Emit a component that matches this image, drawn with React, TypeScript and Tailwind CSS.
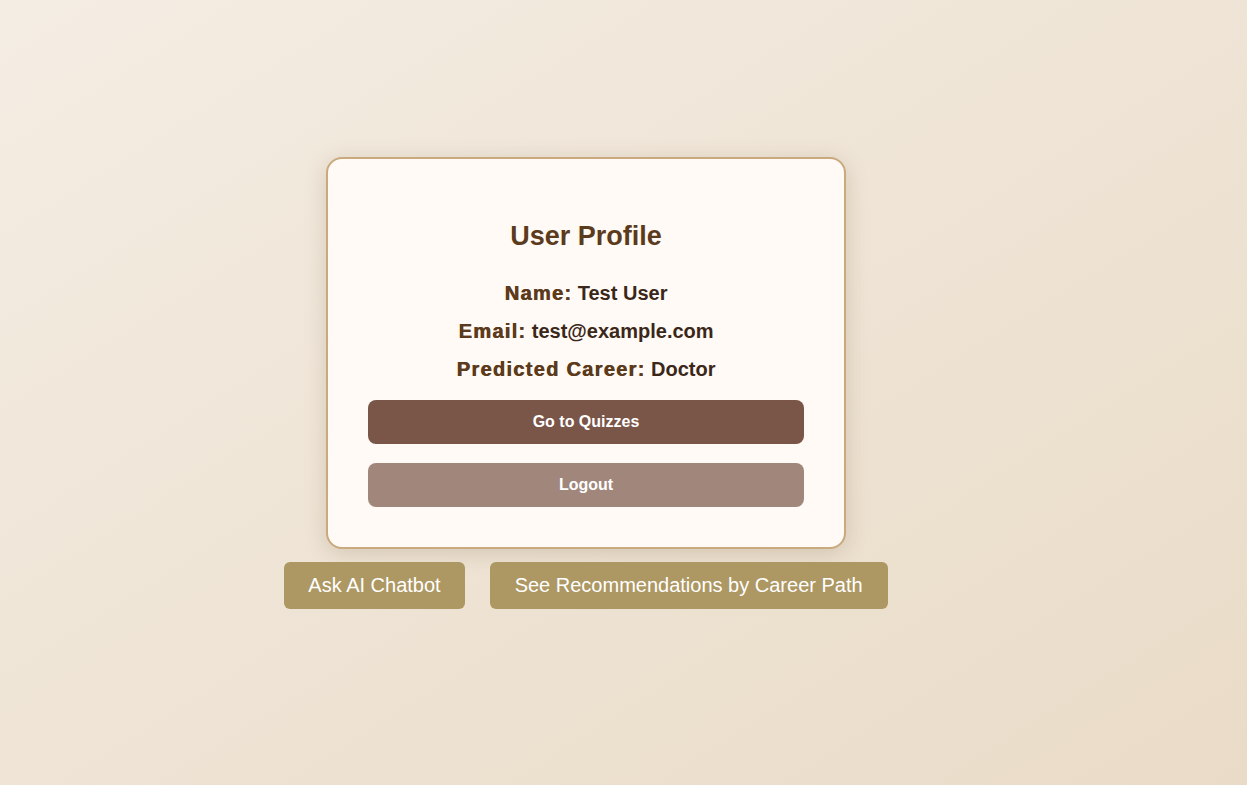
export default function App() {
  return (
    <div className="min-h-screen w-full bg-gradient-to-br from-[#f4ede3] to-[#e9dbc7] font-['Liberation_Sans',Arial,sans-serif] pt-[157px] pb-10 pr-[75px] flex flex-col items-center">
      {/* Profile card */}
      <div className="w-[520px] rounded-2xl border-2 border-[#c9a97d] bg-[#fffaf5] shadow-[0_4px_22px_rgba(90,60,30,0.18)] px-10 pt-[61px] pb-10 flex flex-col items-center">
        <h2 className="text-[27px] leading-[32px] font-bold text-[#5c3a1c]">User Profile</h2>

        <div className="mt-[30px] flex flex-col items-center gap-[15px] text-[20px] leading-[23px] font-bold text-[#3b2719]">
          <p>
            <strong className="font-black tracking-[1.3px] text-[#5c3a1c] [text-shadow:0.6px_0_0_#5c3a1c]">Name:</strong> Test User
          </p>
          <p>
            <strong className="font-black tracking-[1.3px] text-[#5c3a1c] [text-shadow:0.6px_0_0_#5c3a1c]">Email:</strong> test@example.com
          </p>
          <p>
            <strong className="font-black tracking-[1.3px] text-[#5c3a1c] [text-shadow:0.6px_0_0_#5c3a1c]">Predicted Career:</strong> Doctor
          </p>
        </div>

        <div className="mt-[19px] w-full flex flex-col gap-[19px]">
          <button className="h-[44px] w-full rounded-lg bg-[#7a5649] text-white text-base font-bold">
            Go to Quizzes
          </button>
          <button className="h-[44px] w-full rounded-lg bg-[#a1867c] text-white text-base font-bold">
            Logout
          </button>
        </div>
      </div>

      {/* Extra actions */}
      <div className="mt-[13px] flex gap-[25px]">
        <button className="rounded-md bg-[#ad9763] px-6 py-3 text-[20px] leading-[23px] text-white">
          Ask AI Chatbot
        </button>
        <button className="rounded-md bg-[#ad9763] px-[25px] py-3 text-[20px] leading-[23px] text-white">
          See Recommendations by Career Path
        </button>
      </div>
    </div>
  );
}
